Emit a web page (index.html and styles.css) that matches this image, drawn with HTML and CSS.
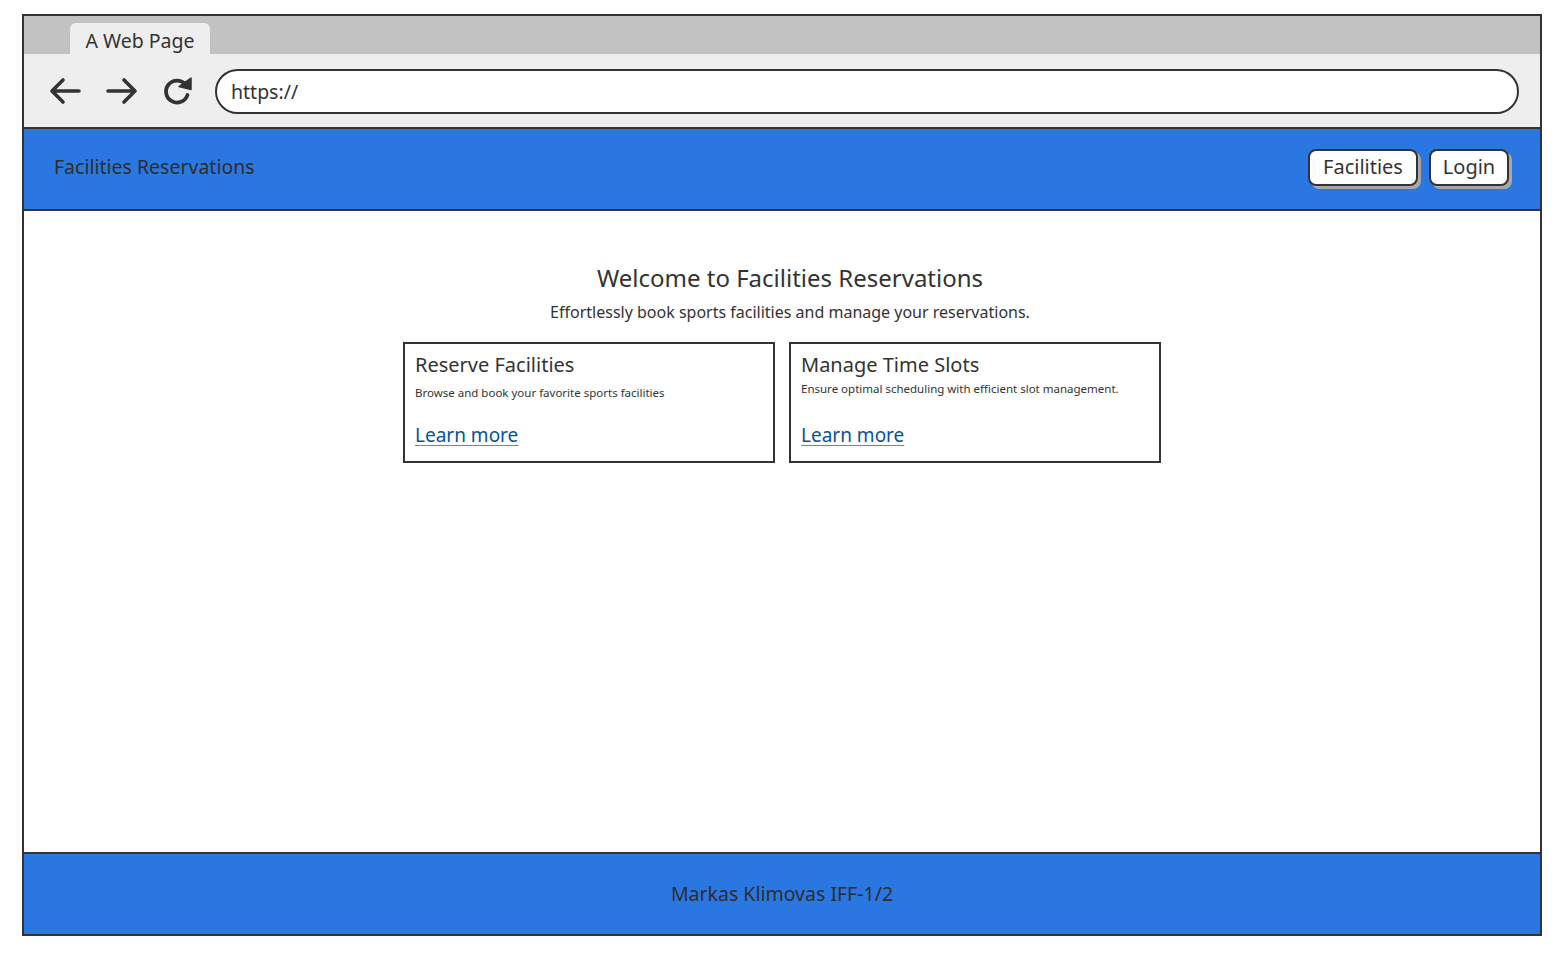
FILE: index.html
```html
<!DOCTYPE html>
<html>
<head>
<meta charset="utf-8">
<title>Facilities Reservations</title>
<link rel="stylesheet" href="styles.css">
</head>
<body>
<div class="window">
  <div class="tabbar">
    <div class="tab">A Web Page</div>
  </div>
  <div class="toolbar">
    <div class="navicons">
      <svg class="icon" width="34" height="28" viewBox="0 0 34 28"><path d="M31 14H4M15 3L4 14l11 11" fill="none" stroke="#333" stroke-width="3.6" stroke-linecap="round" stroke-linejoin="round"/></svg>
      <svg class="icon" width="34" height="28" viewBox="0 0 34 28"><path d="M3 14h27M19 3l11 11-11 11" fill="none" stroke="#333" stroke-width="3.6" stroke-linecap="round" stroke-linejoin="round"/></svg>
      <svg class="icon" width="32" height="30" viewBox="0 0 32 30"><path d="M23.5 8.5A11 11 0 1 0 25.5 19" fill="none" stroke="#333" stroke-width="3.8" stroke-linecap="round"/><path d="M17 10.5L29 2v11.5z" fill="#333" stroke="#333" stroke-width="1.5" stroke-linejoin="round"/></svg>
    </div>
    <div class="urlbar">https://</div>
  </div>
  <header class="header">
    <div class="brand">Facilities Reservations</div>
    <nav class="nav">
      <span class="btn btn-facilities">Facilities</span>
      <span class="btn btn-login">Login</span>
    </nav>
  </header>
  <main class="main">
    <h1 class="title">Welcome to Facilities Reservations</h1>
    <p class="subtitle">Effortlessly book sports facilities and manage your reservations.</p>
    <div class="cards">
      <div class="card">
        <h2 class="card-title">Reserve Facilities</h2>
        <p class="card-text card-text-a">Browse and book your favorite sports facilities</p>
        <a class="card-link" href="#">Learn more</a>
      </div>
      <div class="card">
        <h2 class="card-title">Manage Time Slots</h2>
        <p class="card-text card-text-b">Ensure optimal scheduling with efficient slot management.</p>
        <a class="card-link" href="#">Learn more</a>
      </div>
    </div>
  </main>
  <footer class="footer">Markas Klimovas IFF-1/2</footer>
</div>
</body>
</html>
```
FILE: styles.css
```css
* { box-sizing: border-box; }
html, body { margin: 0; padding: 0; background: #fff; }
body {
  font-family: "Noto Sans", Lato, sans-serif;
  color: #333;
}
.window {
  margin: 14px 0 0 22px;
  width: 1520px;
  height: 922px;
  border: 2px solid #333;
  display: flex;
  flex-direction: column;
}
.tabbar {
  height: 38px;
  background: #c2c2c2;
  display: flex;
  align-items: flex-end;
  padding-left: 46px;
}
.tab {
  width: 140px;
  height: 31px;
  background: #eeeeee;
  border-radius: 6px 6px 0 0;
  font-size: 19.5px;
  display: flex;
  align-items: center;
  justify-content: center;
  padding-top: 3px;
}
.toolbar {
  height: 75px;
  background: #eeeeee;
  border-bottom: 2px solid #333;
  display: flex;
  align-items: center;
  padding: 0 21px 0 24px;
}
.navicons {
  display: flex;
  align-items: center;
  gap: 23px;
  width: 167px;
  flex: none;
  margin-top: 1px;
}
.icon { display: block; flex: none; }
.urlbar {
  flex: 1;
  height: 45px;
  background: #fff;
  border: 2px solid #333;
  border-radius: 23px;
  display: flex;
  align-items: center;
  padding-left: 14px;
  font-size: 19.5px;
  margin-top: 2px;
}
.header {
  height: 82px;
  background: #2a77e2;
  border-bottom: 2px solid #333;
  display: flex;
  align-items: center;
  justify-content: space-between;
  padding: 0 31px 0 30px;
}
.brand { font-size: 19.5px; color: #2d2d2d; margin-top: -6px; }
.nav { display: flex; gap: 11px; margin-top: -4px; }
.btn {
  height: 37px;
  background: #fff;
  border: 2px solid #333;
  border-radius: 8px;
  box-shadow: 3px 3px 0 #a8a8a8;
  display: flex;
  align-items: center;
  justify-content: center;
  font-size: 20px;
  padding-bottom: 2px;
}
.btn-facilities { width: 110px; }
.btn-login { width: 80px; }
.main {
  flex: 1;
  display: flex;
  flex-direction: column;
  align-items: center;
  padding-top: 52px;
}
.title {
  margin: 0;
  font-size: 24px;
  font-weight: normal;
  line-height: 30px;
  transform: translateX(8px);
}
.subtitle {
  margin: 8px 0 0;
  font-size: 16px;
  line-height: 22px;
  transform: translateX(8px);
}
.cards {
  display: flex;
  gap: 14px;
  margin-top: 19px;
}
.card {
  width: 372px;
  height: 121px;
  border: 2px solid #333;
  padding: 8px 10px 0;
  display: flex;
  flex-direction: column;
  align-items: flex-start;
}
.card-title {
  margin: 0;
  font-size: 20px;
  font-weight: normal;
  line-height: 26px;
}
.card-text {
  margin: 0;
  font-size: 11.5px;
  line-height: 14px;
}
.card-text-a { margin-top: 8px; }
.card-text-b { margin-top: 4px; }
.card-link {
  margin-top: auto;
  margin-bottom: 14px;
  font-size: 19px;
  line-height: 24px;
  color: #0b5099;
  text-decoration: underline;
  text-decoration-color: #5a8ac4;
  text-underline-offset: 3px;
}
.footer {
  height: 82px;
  background: #2a77e2;
  border-top: 2px solid #333;
  display: flex;
  align-items: center;
  justify-content: center;
  font-size: 19.5px;
  color: #2d2d2d;
  padding-bottom: 2px;
}
```
